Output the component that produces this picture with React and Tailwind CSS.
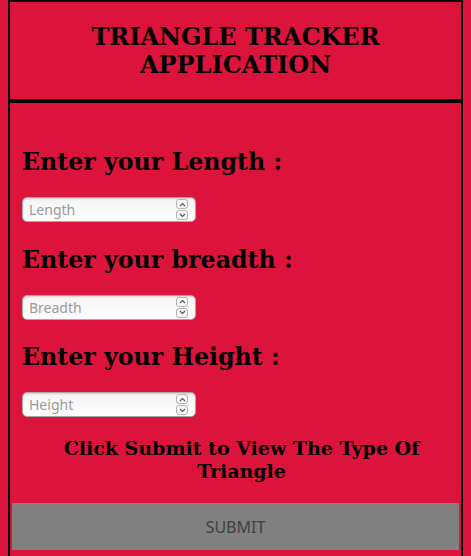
export default function App() {
  const serif = { fontFamily: '"DejaVu Serif", serif' };
  const fields = [
    { label: "Enter your Length :", ph: "Length" },
    { label: "Enter your breadth :", ph: "Breadth" },
    { label: "Enter your Height :", ph: "Height" },
  ];
  return (
    <div className="min-h-[556px] bg-[#dc143c]">
      <div className="mx-2 min-h-[570px] border-x-2 border-t-2 border-black">
        <div className="flex h-[101px] items-center justify-center border-b-[4px] border-black">
          <h1
            className="text-center text-[24px] font-bold leading-[28px] text-black"
            style={serif}
          >
            TRIANGLE TRACKER
            <br />
            APPLICATION
          </h1>
        </div>
        <div className="pl-3 pt-[45px]">
          {fields.map((f, i) => (
            <div key={f.ph} className={i === 0 ? "" : "mt-[23.5px]"}>
              <h2
                className="text-[23.7px] font-bold leading-[28px] text-black"
                style={serif}
              >
                {f.label}
              </h2>
              <div className="relative mt-[21px] h-[25px] w-[174px] rounded-[5px] border border-[#a9a9a9] bg-gradient-to-b from-[#f4f4f4] to-white shadow-[inset_0_1px_2px_rgba(0,0,0,0.15)]">
                <span
                  className="absolute left-[6px] top-[3px] text-[14px] leading-[17px] text-[#9a9a9a]"
                  style={{ fontFamily: '"Noto Sans", "DejaVu Sans", sans-serif' }}
                >
                  {f.ph}
                </span>
                <div className="absolute right-[7px] top-[1px] flex flex-col gap-[1px]">
                  <div className="flex h-[10px] w-[12px] items-center justify-center rounded-[3px] border border-[#b5b5b5] bg-[#f7f7f7]">
                    <svg width="7" height="5" viewBox="0 0 7 5">
                      <path d="M1 4 L3.5 1.5 L6 4" fill="none" stroke="#555" strokeWidth="1.1" />
                    </svg>
                  </div>
                  <div className="flex h-[10px] w-[12px] items-center justify-center rounded-[3px] border border-[#b5b5b5] bg-[#f7f7f7]">
                    <svg width="7" height="5" viewBox="0 0 7 5">
                      <path d="M1 1 L3.5 3.5 L6 1" fill="none" stroke="#555" strokeWidth="1.1" />
                    </svg>
                  </div>
                </div>
              </div>
            </div>
          ))}
          <h3
            className="mt-5 text-center text-[19px] font-bold leading-[23px] text-black"
            style={serif}
          >
            Click Submit to View The Type Of
            <br />
            Triangle
          </h3>
        </div>
        <button
          className="mx-[2px] mt-5 flex h-[47px] w-[calc(100%-4px)] items-center justify-center bg-[#808080] text-[16px] text-[#3f3f3f]"
          style={{ fontFamily: '"Noto Sans", "DejaVu Sans", sans-serif' }}
        >
          SUBMIT
        </button>
      </div>
    </div>
  );
}
